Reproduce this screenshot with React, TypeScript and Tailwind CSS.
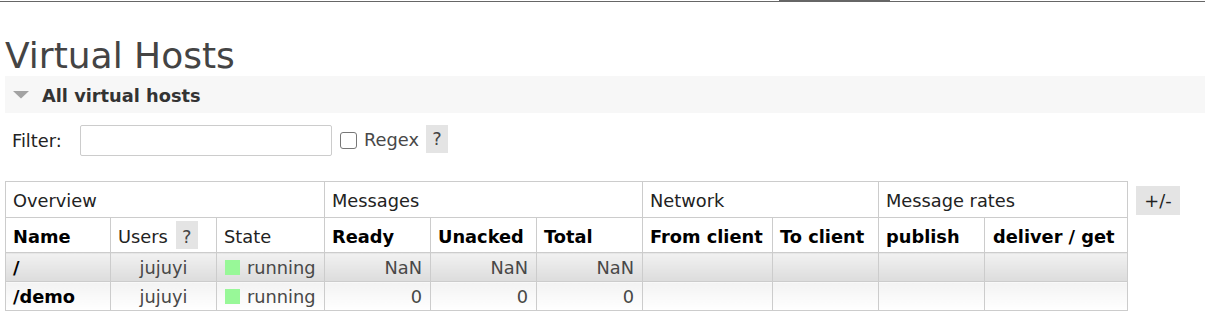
import React from 'react';

// Virtual hosts overview, management console style
const rows = [
  { name: '/', users: 'jujuyi', state: 'running', ready: 'NaN', unacked: 'NaN', total: 'NaN', alt: true },
  { name: '/demo', users: 'jujuyi', state: 'running', ready: '0', unacked: '0', total: '0', alt: false },
];

const Help = ({ className = '' }: { className?: string }) => (
  <span className={`inline-flex items-center justify-center bg-[#e4e4e4] text-[#444] font-normal ${className}`}>?</span>
);

export default function App() {
  const cell = 'border border-[#ccc] px-[7px]';
  const rowBg = (alt: boolean) =>
    alt ? 'bg-gradient-to-b from-[#f1f1f1] to-[#dcdcdc]' : 'bg-gradient-to-b from-[#f3f3f3] to-[#ffffff]';

  return (
    <div className="w-[1205px] h-[325px] bg-white overflow-hidden font-['DejaVu_Sans',Verdana,sans-serif] text-[17.8px] text-[#484848]">
      {/* top nav rule */}
      <div className="flex items-start h-[2px]">
        <div className="w-[779px] h-[1px] mt-[1px] bg-[#666]" />
        <div className="w-[111px] h-[2px] bg-[#666]" />
        <div className="flex-1 h-[1px] mt-[1px] bg-[#666]" />
      </div>

      <h1 className="mt-[33px] h-[41px] leading-[41px] pl-[5px] text-[36px] text-[#444] font-normal">Virtual Hosts</h1>

      <div className="ml-[5px] h-[37px] bg-[#f7f7f7] flex items-center pl-[8px]">
        <svg width="16" height="8" viewBox="0 0 16 8" className="mt-[1px]">
          <polygon points="0,0 16,0 8,7.5" fill="#a3a3a3" />
        </svg>
        <span className="ml-[13px] mt-[3px] font-bold text-[#333]">All virtual hosts</span>
      </div>

      <div className="ml-[12px] mt-[12px] h-[31px] flex items-center">
        <span className="w-[68px] pt-[2px] text-[#222]">Filter:</span>
        <div className="w-[252px] h-[31px] border border-[#ccc] rounded-[2px] bg-white" />
        <div className="ml-[8px] w-[17px] h-[17px] border border-[#777] rounded-[3px] bg-white" />
        <span className="ml-[7px]">Regex</span>
        <Help className="ml-[7px] w-[22px] h-[28px] -mt-[3px]" />
      </div>

      <div className="ml-[5px] mt-[25px] flex items-start gap-[8px]">
        <table className="border-collapse table-fixed w-[1123px] leading-[24px]">
          <colgroup>
            <col className="w-[105px]" />
            <col className="w-[106px]" />
            <col className="w-[108px]" />
            <col className="w-[106px]" />
            <col className="w-[106px]" />
            <col className="w-[106px]" />
            <col className="w-[130px]" />
            <col className="w-[106px]" />
            <col className="w-[106px]" />
            <col className="w-[143px]" />
          </colgroup>
          <thead>
            <tr className="h-[36px] text-[#222]">
              <th colSpan={3} className={`${cell} text-left font-normal pt-[3px]`}>Overview</th>
              <th colSpan={3} className={`${cell} text-left font-normal pt-[3px]`}>Messages</th>
              <th colSpan={2} className={`${cell} text-left font-normal pt-[3px]`}>Network</th>
              <th colSpan={2} className={`${cell} text-left font-normal pt-[3px]`}>Message rates</th>
            </tr>
            <tr className="h-[35px] text-black">
              <th className={`${cell} text-left font-bold pt-[3px]`}>Name</th>
              <th className={`${cell} text-left font-normal text-[#222]`}>
                <span className="inline-flex items-center">
                  <span className="pt-[3px]">Users</span>
                  <Help className="ml-[8px] w-[22px] h-[28px] pt-[3px]" />
                </span>
              </th>
              <th className={`${cell} text-left font-normal text-[#222] pt-[3px]`}>State</th>
              <th className={`${cell} text-left font-bold pt-[3px]`}>Ready</th>
              <th className={`${cell} text-left font-bold pt-[3px]`}>Unacked</th>
              <th className={`${cell} text-left font-bold pt-[3px]`}>Total</th>
              <th className={`${cell} text-left font-bold whitespace-nowrap pt-[3px]`}>From client</th>
              <th className={`${cell} text-left font-bold whitespace-nowrap pt-[3px]`}>To client</th>
              <th className={`${cell} text-left font-bold pt-[3px]`}>publish</th>
              <th className={`${cell} text-left font-bold whitespace-nowrap pl-[8px] pt-[3px]`}>deliver / get</th>
            </tr>
          </thead>
          <tbody>
            {rows.map((r) => (
              <tr key={r.name} className="h-[29px]">
                <td className={`${cell} ${rowBg(r.alt)} text-left font-bold text-black pt-[2px]`}>{r.name}</td>
                <td className={`${cell} ${rowBg(r.alt)} text-center pt-[2px]`}>{r.users}</td>
                <td className={`${cell} ${rowBg(r.alt)} text-left pl-[8px]`}>
                  <span className="flex items-center">
                    <span className="w-[15px] h-[15px] bg-[#98f898]" />
                    <span className="ml-[7px] pt-[2px]">{r.state}</span>
                  </span>
                </td>
                <td className={`${cell} ${rowBg(r.alt)} text-right pr-[8px] pt-[2px]`}>{r.ready}</td>
                <td className={`${cell} ${rowBg(r.alt)} text-right pr-[8px] pt-[2px]`}>{r.unacked}</td>
                <td className={`${cell} ${rowBg(r.alt)} text-right pr-[8px] pt-[2px]`}>{r.total}</td>
                <td className={`${cell} ${rowBg(r.alt)}`} />
                <td className={`${cell} ${rowBg(r.alt)}`} />
                <td className={`${cell} ${rowBg(r.alt)}`} />
                <td className={`${cell} ${rowBg(r.alt)}`} />
              </tr>
            ))}
          </tbody>
        </table>
        <button className="mt-[5px] w-[44px] h-[29px] pt-[2px] bg-[#e4e4e4] text-[#222] flex items-center justify-center">+/-</button>
      </div>
    </div>
  );
}
